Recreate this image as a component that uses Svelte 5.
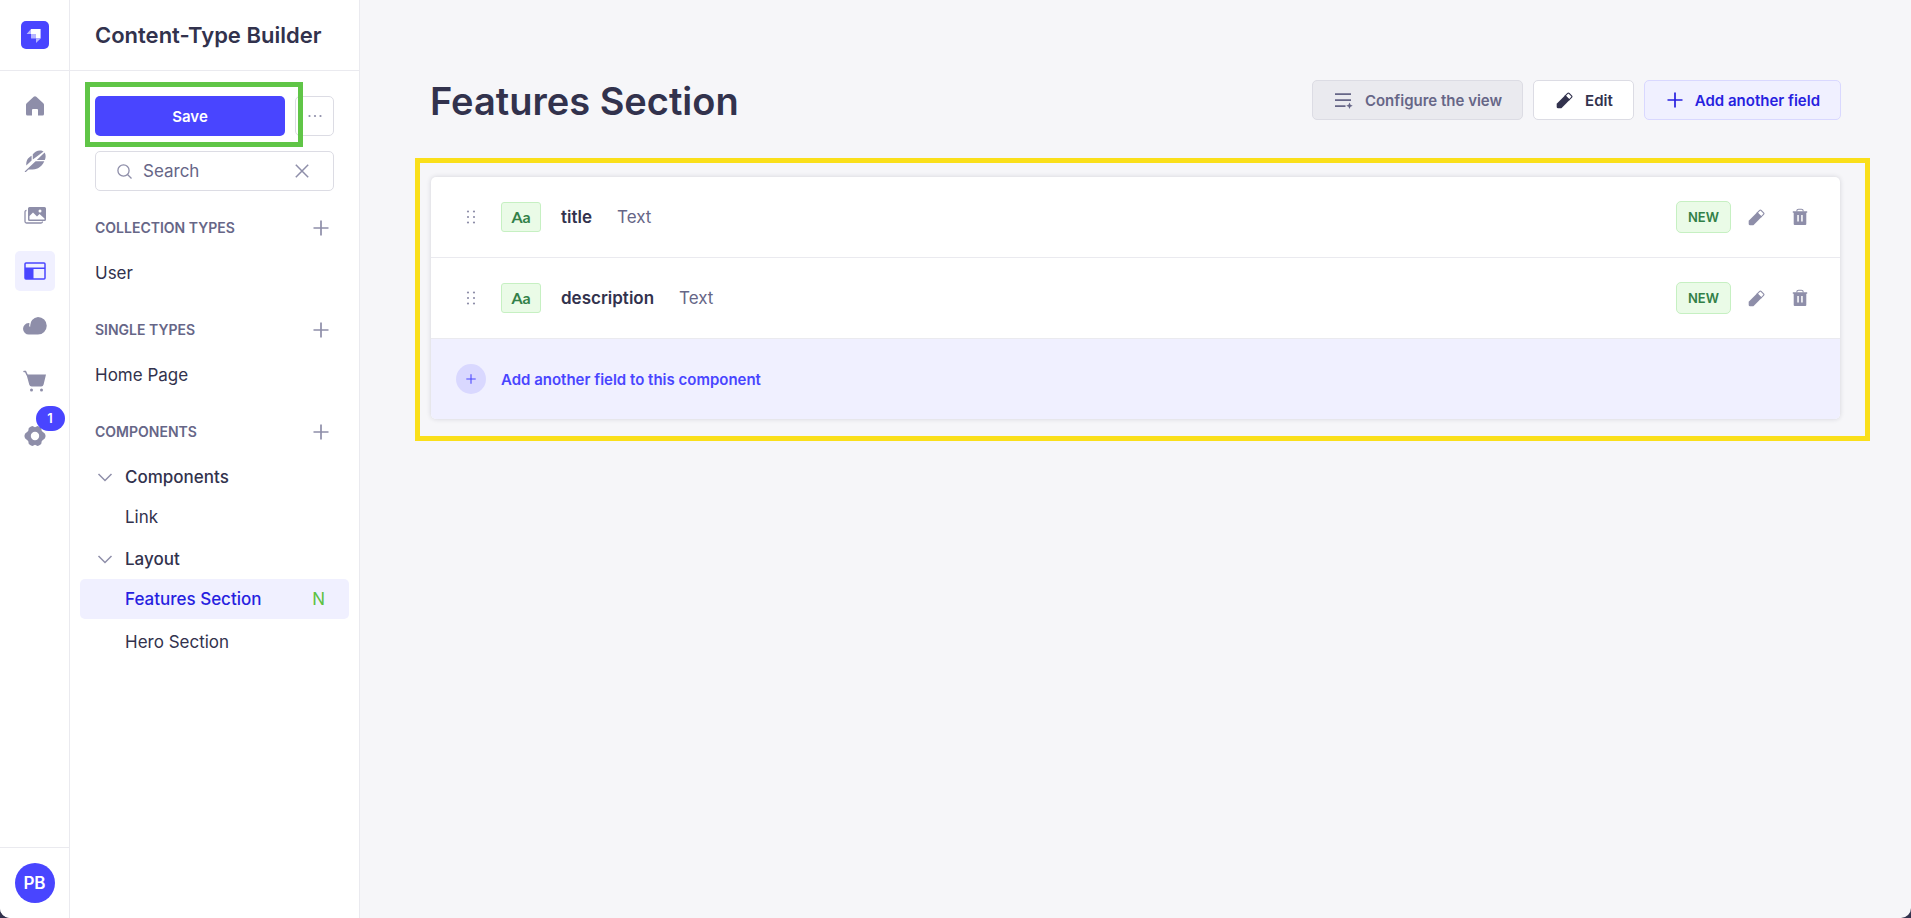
<script>
  let search = $state("");

  const railLinks = [
    { name: "Home", icon: "home" },
    { name: "Content Manager", icon: "feather" },
    { name: "Media Library", icon: "pictures" },
    { name: "Content-Type Builder", icon: "layout", active: true },
    { name: "Deploy", icon: "cloud" },
    { name: "Marketplace", icon: "cart" },
    { name: "Settings", icon: "gear", badge: 1 },
  ];

  const sections = [
    { title: "Collection Types", links: ["User"] },
    { title: "Single Types", links: ["Home Page"] },
  ];

  const groups = [
    { name: "Components", items: [{ name: "Link" }] },
    {
      name: "Layout",
      items: [
        { name: "Features Section", active: true, status: "N" },
        { name: "Hero Section" },
      ],
    },
  ];

  const fields = [
    { name: "title", type: "Text" },
    { name: "description", type: "Text" },
  ];
</script>

{#snippet plus(size)}
  <svg width={size} height={size} viewBox="0 0 16 16" fill="none" stroke="currentColor" stroke-width="1.7" aria-hidden="true">
    <path d="M8 .5v15M.5 8h15" />
  </svg>
{/snippet}

{#snippet pencil()}
  <svg width="17" height="17" viewBox="0 0 24 24" fill="currentColor" aria-hidden="true">
    <path d="M1 16.500 13 4.500l6.500 6.500L8 22.500q-.5.5-1.500.5H3a2 2 0 0 1-2-2z" />
    <path d="m13 5.500 3.500-3.500q1-1 2 0L22 5.500q1 1 0 2L18.500 11z" fill="none" stroke="currentColor" stroke-width="1.600" />
  </svg>
{/snippet}

{#snippet railIcon(icon)}
  {#if icon === "home"}
    <svg width="20" height="20" viewBox="0 0 20 20" fill="currentColor">
      <path d="M8.700.8a2 2 0 0 1 2.600 0l7 6.500a2 2 0 0 1 .7 1.500V18a1.500 1.500 0 0 1-1.500 1.500H13V14a1 1 0 0 0-1-1H8a1 1 0 0 0-1 1v5.500H2.500A1.500 1.500 0 0 1 1 18V8.800a2 2 0 0 1 .7-1.500z" />
    </svg>
  {:else if icon === "feather"}
    <svg width="22" height="22" viewBox="0 0 22 22" fill="currentColor">
      <path d="M2.300 15.500C2 10.800 3.500 8 7.600 5.700v4.800zM8.800 9.400V4.300C10.800 1.800 13 .5 16 .5c1.600 0 2.800.4 3.600 1.100zM20.600 2.600c1.500 2.200 1.200 5 .2 7.400h-8zM11.600 11.200h8.700c-1.300 3.300-3.800 5.600-6.300 7-1.800 1-4 1.200-8.300 1.200H4.500l-3 3-.9-1z" />
    </svg>
  {:else if icon === "pictures"}
    <svg width="22" height="22" viewBox="0 0 22 22" fill="currentColor">
      <path d="M5.500 2h15A1.500 1.500 0 0 1 22 3.500v11a1.500 1.500 0 0 1-1.500 1.500h-15A1.500 1.500 0 0 1 4 14.500v-11A1.500 1.500 0 0 1 5.500 2z" />
      <path d="M5.500 14v-3L9 7.500l4 4L15.500 9l5 4.500v1h-15z" fill="#fff" />
      <circle cx="16" cy="6" r="1.500" fill="#fff" />
      <path d="M2.500 5.500c-1 0-1.500.5-1.500 1.500v9.500C1 17.500 1.500 18 2.500 18H17c1 0 1.500-.5 1.500-1.500" fill="none" stroke="currentColor" stroke-width="1.300" />
    </svg>
  {:else if icon === "layout"}
    <svg width="22" height="18" viewBox="0 0 22 18" fill="currentColor">
      <rect x="1" y="1" width="20" height="16" rx="1" fill="none" stroke="currentColor" stroke-width="1.500" />
      <path d="M1 5.500h20V7H9.500v10H1z" />
    </svg>
  {:else if icon === "cloud"}
    <svg width="24" height="18" viewBox="0 0 24 18" fill="currentColor">
      <path d="M15 0a8.700 8.700 0 0 1 0 17.500H6A5.700 5.700 0 0 1 5.500 6.100l1 .1-.4 3.300h1.200A8.500 8.500 0 0 1 15 0z" />
    </svg>
  {:else if icon === "cart"}
    <svg width="24" height="22" viewBox="0 0 24 22" fill="currentColor">
      <path d="M1 1.500h1.500L4 4.800" fill="none" stroke="currentColor" stroke-width="1.500" stroke-linecap="round" />
      <path d="M3.500 4.500H23l-2.400 10a2.500 2.500 0 0 1-2.400 2H8.700a2.500 2.500 0 0 1-2.400-1.800z" />
      <circle cx="8.500" cy="20" r="1.500" />
      <circle cx="18.500" cy="20" r="1.500" />
    </svg>
  {:else}
    <svg width="22" height="22" viewBox="0 0 22 22" fill="currentColor">
      <path fill-rule="evenodd" d="M7 1.500 8.500 1 11 2.300 13.500 1l1.500.5 2.200 1.400.6 3.200L21 8.800l.6 2.200-.6 2.200-3.200 2.700-.6 3.200L15 20.500l-1.500.5-2.500-1.300L8.500 21 7 20.500l-2.200-1.400-.6-3.200L1 13.200.4 11 1 8.800l3.200-2.700.6-3.200zM11 6.800a4.200 4.200 0 1 0 0 8.400 4.200 4.200 0 0 0 0-8.400z" />
    </svg>
  {/if}
{/snippet}

<div class="app">
  <nav class="rail" aria-label="Main">
    <a class="logo" href="#home" aria-label="Strapi">
      <svg width="28" height="28" viewBox="0 0 28 28">
        <rect width="28" height="28" rx="5" fill="#4945ff" />
        <path d="M10 8h9.600v9.600H15V13h-5z" fill="#fff" />
        <path d="M10 8v5H5.600zM15 17.600h4.600L15 22z" fill="#b6b5ff" />
        <path d="M10 13h5v4.600h-4.500a.5.5 0 0 1-.5-.5z" fill="#b6b5ff" />
      </svg>
    </a>
    <div class="rail-links">
      {#each railLinks as link}
        <a class="rail-link" class:active={link.active} href="#{link.icon}" aria-label={link.name}>
          {@render railIcon(link.icon)}
          {#if link.badge}
            <span class="badge">{link.badge}</span>
          {/if}
        </a>
      {/each}
    </div>
    <div class="rail-footer">
      <button class="avatar">PB</button>
    </div>
  </nav>

  <aside class="sidebar">
    <header>
      <h2>Content-Type Builder</h2>
    </header>
    <div class="tools">
      <div class="actions">
        <button class="save">Save</button>
        <button class="more" aria-label="More actions">
          <svg width="14" height="4" viewBox="0 0 14 4" fill="currentColor">
            <circle cx="1.500" cy="2" r="1.100" />
            <circle cx="7" cy="2" r="1.100" />
            <circle cx="12.500" cy="2" r="1.100" />
          </svg>
        </button>
        <div class="save-outline"></div>
      </div>
      <div class="search">
        <svg width="15" height="15" viewBox="0 0 15 15" fill="none" stroke="currentColor" stroke-width="1.300">
          <circle cx="6.500" cy="6.500" r="5.600" />
          <path d="m10.500 10.500 4 4" />
        </svg>
        <input type="text" placeholder="Search" aria-label="Search" bind:value={search} />
        <button aria-label="Clear" onclick={() => (search = "")}>
          <svg width="14" height="14" viewBox="0 0 14 14" fill="none" stroke="currentColor" stroke-width="1.500">
            <path d="m.8.8 12.400 12.400M13.200.8.8 13.200" />
          </svg>
        </button>
      </div>
    </div>

    {#each sections as section}
      <section>
        <div class="section-head">
          <h3>{section.title}</h3>
          <button aria-label="Create">{@render plus(16)}</button>
        </div>
        {#each section.links as link}
          <a class="link" href="#{link}">{link}</a>
        {/each}
      </section>
    {/each}

    <section>
      <div class="section-head">
        <h3>Components</h3>
        <button aria-label="Create">{@render plus(16)}</button>
      </div>
      <div class="groups">
        {#each groups as group}
          <div>
            <button class="group-name">
              <svg width="16" height="9" viewBox="0 0 16 9" fill="none" stroke="currentColor" stroke-width="1.500">
                <path d="m1.500 1 6.500 6.500L14.500 1" />
              </svg>
              {group.name}
            </button>
            <div class="group-items">
              {#each group.items as item}
                <a class="item" class:active={item.active} href="#{item.name}">
                  {item.name}
                  {#if item.status}
                    <span class="status">{item.status}</span>
                  {/if}
                </a>
              {/each}
            </div>
          </div>
        {/each}
      </div>
    </section>
  </aside>

  <main>
    <div class="page-head">
      <h1>Features Section</h1>
      <div class="buttons">
        <button class="btn disabled" disabled>
          <svg width="18" height="17" viewBox="0 0 18 17" fill="currentColor">
            <path d="M0 1.200h16v1.900H0zM0 7.200h16v1.900H0zM0 13.200h10.500v1.900H0zM14.500 10.600l1 2.200 2.200 1-2.200 1-1 2.200-1-2.200-2.200-1 2.200-1z" />
          </svg>
          Configure the view
        </button>
        <button class="btn">
          {@render pencil()}
          Edit
        </button>
        <button class="btn secondary">
          {@render plus(16)}
          Add another field
        </button>
      </div>
    </div>

    <div class="fields">
      <div class="card">
        <ul>
          {#each fields as field}
            <li>
              <button class="grip" aria-label="Drag">
                <svg width="10" height="14" viewBox="0 0 10 14" fill="currentColor">
                  {#each [1.5, 7, 12.5] as cy}
                    <circle cx="2" {cy} r="1.100" />
                    <circle cx="8" {cy} r="1.100" />
                  {/each}
                </svg>
              </button>
              <span class="type-icon">Aa</span>
              <span class="field-name">{field.name}</span>
              <span class="field-type">{field.type}</span>
              <span class="new">New</span>
              <button class="row-btn" aria-label="Edit {field.name}">{@render pencil()}</button>
              <button class="row-btn" aria-label="Delete {field.name}">
                <svg width="16" height="18" viewBox="0 0 16 18" fill="currentColor">
                  <path d="M4.800 3.500V3A1.800 1.800 0 0 1 6.600 1.200h2.800A1.800 1.800 0 0 1 11.200 3v.5" fill="none" stroke="currentColor" stroke-width="1.100" />
                  <path fill-rule="evenodd" d="M.8 3.300h14.400v1.500h-.9v11.200a1 1 0 0 1-1 1H2.700a1 1 0 0 1-1-1V4.800H.8zM5.300 7v6.500h1.500V7zM9.200 7v6.500h1.500V7z" />
                </svg>
              </button>
            </li>
          {/each}
        </ul>
        <button class="add-row">
          <span class="circle">{@render plus(10)}</span>
          Add another field to this component
        </button>
      </div>
      <div class="fields-outline"></div>
    </div>
  </main>
</div>

<style>
  :global(body) {
    background: #32324d;
    font-family: Inter, "Liberation Sans", sans-serif;
    color: #32324d;
  }

  .app {
    display: flex;
    min-height: 100vh;
    background: #f6f6f9;
    border-radius: 0 0 10px 10px;
    overflow: hidden;
  }

  h1,
  h2,
  h3,
  ul {
    margin: 0;
    padding: 0;
  }

  h1,
  h2,
  h3 {
    font-weight: 600;
  }

  a {
    color: inherit;
    text-decoration: none;
  }

  button {
    display: flex;
    align-items: center;
    justify-content: center;
    padding: 0;
    border: 0;
    background: none;
    color: #8e8ea9;
    font: inherit;
    cursor: pointer;
  }

  svg {
    display: block;
    flex: none;
  }

  .rail {
    display: flex;
    flex-direction: column;
    width: 69px;
    flex: none;
    background: #fff;
    border-right: 1px solid #eaeaef;
  }

  .logo {
    display: flex;
    align-items: center;
    justify-content: center;
    height: 70px;
    border-bottom: 1px solid #eaeaef;
  }

  .rail-links {
    display: flex;
    flex-direction: column;
    align-items: center;
    gap: 15px;
    padding-top: 15px;
    flex: 1;
  }

  .rail-link {
    position: relative;
    display: flex;
    align-items: center;
    justify-content: center;
    width: 40px;
    height: 40px;
    border-radius: 5px;
    color: #8e8ea9;
  }

  .rail-link.active {
    background: #f0f0ff;
    color: #4945ff;
  }

  .badge {
    position: absolute;
    top: -10px;
    right: -10px;
    width: 29px;
    line-height: 25px;
    border-radius: 13px;
    background: #4945ff;
    color: #fff;
    font-size: 13px;
    font-weight: 600;
    text-align: center;
  }

  .rail-footer {
    display: flex;
    justify-content: center;
    padding: 15px 0;
    border-top: 1px solid #eaeaef;
  }

  .avatar {
    width: 40px;
    height: 40px;
    border-radius: 50%;
    background: #4945ff;
    color: #fff;
    font-size: 17px;
    font-weight: 600;
  }

  .sidebar {
    width: 289px;
    flex: none;
    background: #fff;
    border-right: 1px solid #eaeaef;
  }

  .sidebar header {
    display: flex;
    align-items: center;
    height: 70px;
    padding: 0 25px;
    border-bottom: 1px solid #eaeaef;
  }

  h2 {
    font-size: 22px;
    white-space: nowrap;
  }

  .tools {
    display: grid;
    grid-template-columns: minmax(0, 1fr);
    gap: 15px;
    padding: 25px 25px 17px;
  }

  .actions {
    position: relative;
    display: flex;
    gap: 10px;
  }

  .save {
    flex: 1;
    height: 40px;
    border-radius: 5px;
    background: #4945ff;
    color: #fff;
    font-size: 15px;
    font-weight: 600;
  }

  .more {
    width: 39px;
    border: 1px solid #dcdce4;
    border-radius: 5px;
  }

  .save-outline {
    position: absolute;
    inset: -14px 31px -11px -10px;
    border: 5px solid #60c547;
    pointer-events: none;
  }

  .search {
    display: flex;
    align-items: center;
    gap: 11px;
    height: 38px;
    padding: 0 24px 0 21px;
    border: 1px solid #dcdce4;
    border-radius: 5px;
    color: #8e8ea9;
  }

  .search input {
    flex: 1;
    min-width: 0;
    padding: 0;
    border: 0;
    outline: 0;
    background: none;
    color: #32324d;
    font: inherit;
    font-size: 17px;
  }

  .search input::placeholder {
    color: #666687;
    opacity: 1;
  }

  section {
    padding-bottom: 15px;
  }

  .section-head {
    display: flex;
    align-items: center;
    justify-content: space-between;
    height: 40px;
    padding: 0 30px 0 25px;
  }

  h3 {
    color: #666687;
    font-size: 14px;
    line-height: 20px;
    text-transform: uppercase;
  }

  .link {
    display: block;
    padding: 8px 25px 4px;
    font-size: 17px;
    line-height: 35px;
  }

  .groups {
    padding-top: 3px;
  }

  .group-name {
    gap: 12px;
    height: 40px;
    margin: 2px 0 0 27px;
    color: #32324d;
    font-size: 17px;
    font-weight: 500;
  }

  .group-name svg {
    color: #8e8ea9;
  }

  .group-items {
    display: grid;
    gap: 3px;
    margin: 0 10px;
  }

  .item {
    display: flex;
    align-items: center;
    justify-content: space-between;
    height: 40px;
    padding: 0 24px 0 45px;
    border-radius: 5px;
    font-size: 17px;
  }

  .item.active {
    background: #f0f0ff;
    color: #271fe0;
    font-weight: 500;
  }

  .status {
    color: #5cc141;
    font-weight: 400;
  }

  main {
    flex: 1;
    min-width: 0;
    padding: 80px 70px;
  }

  .page-head {
    display: flex;
    align-items: flex-start;
    justify-content: space-between;
  }

  h1 {
    font-size: 38px;
    line-height: 42px;
  }

  .buttons {
    display: flex;
    gap: 10px;
  }

  .btn {
    gap: 12px;
    height: 40px;
    padding: 0 20px 0 22px;
    border: 1px solid #dcdce4;
    border-radius: 5px;
    background: #fff;
    color: #32324d;
    font-size: 15px;
    font-weight: 600;
  }

  .btn.disabled {
    background: #eaeaef;
    color: #666687;
  }

  .btn.secondary {
    border-color: #d9d8ff;
    background: #f0f0ff;
    color: #271fe0;
  }

  .fields {
    position: relative;
    margin-top: 55px;
  }

  .fields-outline {
    position: absolute;
    inset: -19px -29px -22px -15px;
    border: 5px solid #fadf1a;
    pointer-events: none;
  }

  .card {
    margin: 0 1px;
    border-radius: 5px;
    background: #fff;
    box-shadow: 0 0 5px rgba(33, 33, 52, 0.16);
    overflow: hidden;
  }

  li {
    display: flex;
    align-items: center;
    height: 80px;
    padding: 0 18px 0 25px;
    border-bottom: 1px solid #eaeaef;
    font-size: 17px;
  }

  .grip {
    width: 30px;
    height: 30px;
    margin-right: 15px;
  }

  .type-icon {
    width: 38px;
    margin-right: 20px;
    border: 1px solid #c6f0c2;
    border-radius: 3px;
    background: #eafbe7;
    color: #328048;
    font-family: Lato, sans-serif;
    font-size: 16px;
    font-weight: 700;
    line-height: 28px;
    text-align: center;
  }

  .field-name {
    font-weight: 600;
  }

  .field-type {
    margin-left: 25px;
    color: #666687;
  }

  .new {
    margin-left: auto;
    margin-right: 3px;
    padding: 0 11px;
    border: 1px solid #c6f0c2;
    border-radius: 5px;
    background: #eafbe7;
    color: #328048;
    font-size: 13px;
    font-weight: 600;
    line-height: 30px;
    text-transform: uppercase;
  }

  .row-btn {
    width: 44px;
    height: 40px;
  }

  .add-row {
    width: 100%;
    height: 80px;
    justify-content: flex-start;
    gap: 15px;
    padding: 0 25px;
    background: #f0f0ff;
    color: #4945ff;
    font-size: 15px;
    font-weight: 600;
  }

  .circle {
    display: flex;
    align-items: center;
    justify-content: center;
    width: 30px;
    height: 30px;
    border-radius: 50%;
    background: #d9d8ff;
  }
</style>
